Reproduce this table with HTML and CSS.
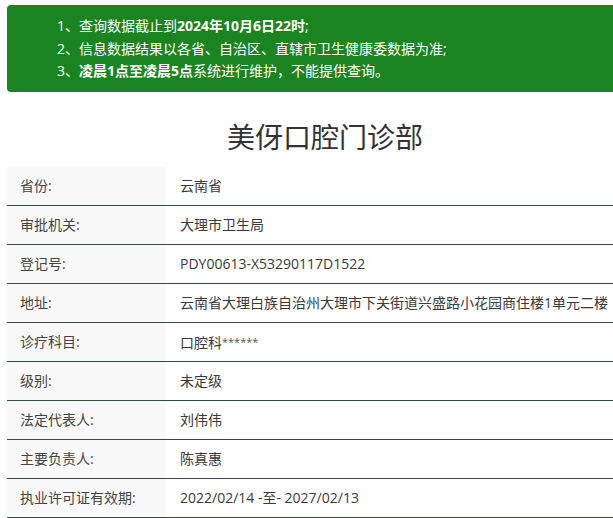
FILE: index.html
```html
<!DOCTYPE html>
<html lang="zh-CN">
<head>
<meta charset="utf-8">
<title>美伢口腔门诊部</title>
<link rel="stylesheet" href="styles.css">
</head>
<body>
<div class="page">
  <div class="notice">
    <p>1、查询数据截止到<b>2024年10月6日22时</b>;</p>
    <p>2、信息数据结果以各省、自治区、直辖市卫生健康委数据为准;</p>
    <p>3、<b>凌晨1点至凌晨5点</b>系统进行维护，不能提供查询。</p>
  </div>
  <h1 class="title">美伢口腔门诊部</h1>
  <div class="table">
    <div class="row"><div class="label">省份:</div><div class="value">云南省</div></div>
    <div class="row"><div class="label">审批机关:</div><div class="value">大理市卫生局</div></div>
    <div class="row"><div class="label">登记号:</div><div class="value">PDY00613-X53290117D1522</div></div>
    <div class="row"><div class="label">地址:</div><div class="value">云南省大理白族自治州大理市下关街道兴盛路小花园商住楼1单元二楼</div></div>
    <div class="row"><div class="label">诊疗科目:</div><div class="value">口腔科<span class="stars">******</span></div></div>
    <div class="row"><div class="label">级别:</div><div class="value">未定级</div></div>
    <div class="row"><div class="label">法定代表人:</div><div class="value">刘伟伟</div></div>
    <div class="row"><div class="label">主要负责人:</div><div class="value">陈真惠</div></div>
    <div class="row"><div class="label">执业许可证有效期:</div><div class="value">2022/02/14 -至- 2027/02/13</div></div>
  </div>
</div>
</body>
</html>
```
FILE: styles.css
```css
html, body {
  margin: 0;
  padding: 0;
  overflow: hidden;
  background: #fff;
}
body {
  font-family: "Open Sans", "Noto Sans CJK SC", sans-serif;
  color: #333;
}
.page {
  width: 636px;
  padding: 5px 0 0 7px;
}
.notice {
  background: #1a8421;
  border-radius: 4px;
  color: #fff;
  font-size: 14px;
  padding: 10px 0 10px 50px;
  height: 67px;
}
.notice p {
  margin: 0;
  line-height: 22.5px;
}
.notice b {
  font-weight: 700;
}
.title {
  margin: 25px 0 10px;
  font-size: 28px;
  font-weight: 400;
  line-height: 40px;
  text-align: center;
  color: #333;
}
.table {
  display: flex;
  flex-direction: column;
}
.row {
  display: flex;
  height: 38px;
  border-bottom: 1px solid #2f4f3f;
  font-size: 14px;
  line-height: 38px;
}
.label {
  width: 146px;
  padding-left: 13px;
  background: #f9f9f9;
  color: #444;
}
.value {
  padding-left: 14px;
  color: #3a3a3a;
  white-space: nowrap;
}
.stars {
  font-size: 11px;
  color: #555;
  vertical-align: 2px;
}
```
